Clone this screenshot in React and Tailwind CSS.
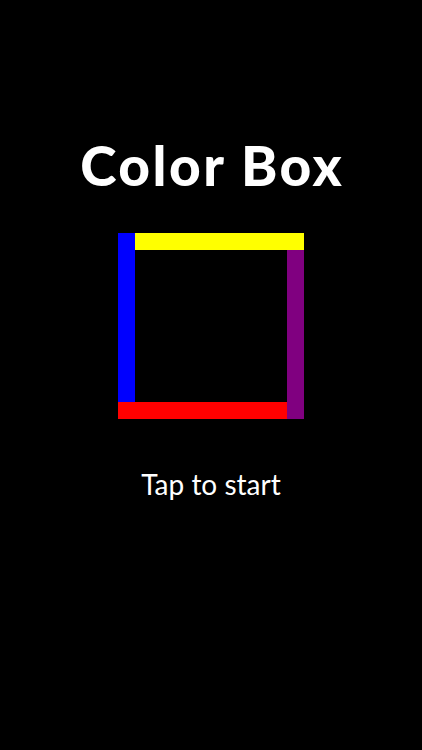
export default function App() {
  return (
    <div className="h-[750px] w-full bg-black flex flex-col items-center">
      <h1 className="mt-[133px] pl-[2.5px] text-[55px] leading-[64px] font-black text-white font-['Lato',sans-serif] tracking-[2.5px]">Color Box</h1>
      <div className="mt-[36px] grid grid-cols-[17px_152px_17px] grid-rows-[17px_152px_17px] w-[186px] h-[186px]">
        <div className="col-start-2 col-end-4 row-start-1 row-end-2 bg-[#ffff00]" />
        <div className="col-start-3 col-end-4 row-start-2 row-end-4 bg-[#800080]" />
        <div className="col-start-1 col-end-3 row-start-3 row-end-4 bg-[#ff0000]" />
        <div className="col-start-1 col-end-2 row-start-1 row-end-3 bg-[#0000ff]" />
      </div>
      <p className="mt-[49px] text-[28px] leading-[32px] text-white font-['Lato',sans-serif]">Tap to start</p>
    </div>
  );
}
